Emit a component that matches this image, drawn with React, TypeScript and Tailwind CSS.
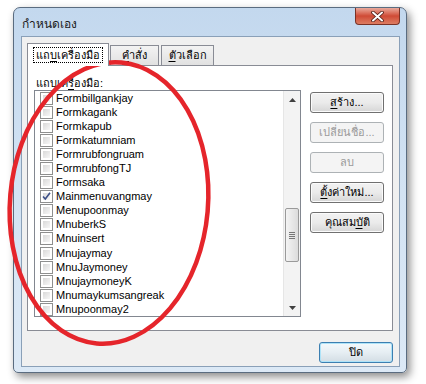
const rows = [
  'Formbillgankjay',
  'Formkagank',
  'Formkapub',
  'Formkatumniam',
  'Formrubfongruam',
  'FormrubfongTJ',
  'Formsaka',
  'Mainmenuvangmay',
  'Menupoonmay',
  'MnuberkS',
  'Mnuinsert',
  'Mnujaymay',
  'MnuJaymoney',
  'MnujaymoneyK',
  'Mnumaykumsangreak',
  'Mnupoonmay2',
];

function CheckBox({ checked }: { checked?: boolean }) {
  return (
    <div className="w-[13px] h-[13px] shrink-0 border border-[#8e8f8f] bg-white p-[2px]">
      <div className="relative w-full h-full bg-gradient-to-br from-[#d9d9d9] to-[#f7f7f7]">
        {checked && (
          <svg className="absolute -left-[2px] -top-[2px]" width="11" height="11" viewBox="0 0 11 11">
            <path d="M2 5.5 L4.3 8 L9 1.8" fill="none" stroke="#3c4f86" strokeWidth="1.6" />
          </svg>
        )}
      </div>
    </div>
  );
}

function U({ children }: { children: string }) {
  return <span className="underline underline-offset-2">{children}</span>;
}

function Btn({ children, disabled, main }: { children: React.ReactNode; disabled?: boolean; main?: boolean }) {
  if (disabled) {
    return (
      <div className="flex items-center justify-center w-[74px] h-[21px] rounded-[3px] border border-[#adb2b5] bg-[#f4f4f4] text-[11px] text-[#9a9a9a]">
        {children}
      </div>
    );
  }
  return (
    <div
      className={
        main
          ? 'flex items-center justify-center w-[74px] h-[21px] rounded-[3px] border border-[#3c7fb1] bg-gradient-to-b from-[#f4f9fc] via-[#e6eef3] to-[#d3dde4] shadow-[inset_0_0_0_1px_#aee3f8] text-[11px] text-black'
          : 'flex items-center justify-center w-[74px] h-[21px] rounded-[3px] border border-[#707070] bg-gradient-to-b from-[#f2f2f2] via-[#ebebeb] to-[#d6d6d6] shadow-[inset_0_0_0_1px_#fbfbfb] text-[11px] text-black'
      }
    >
      {children}
    </div>
  );
}

function ScrollBar() {
  return (
    <div className="flex flex-col w-[17px] h-full border-l border-[#e6e6e6] bg-[#f3f3f3]">
      <div className="flex items-center justify-center h-[17px]">
        <svg width="7" height="4" viewBox="0 0 7 4">
          <path d="M0 4 L3.5 0 L7 4 Z" fill="#404040" />
        </svg>
      </div>
      <div className="flex-1">
        <div className="mt-[100px] mx-[1px] h-[54px] rounded-[2px] border border-[#9a9a9a] bg-gradient-to-r from-[#f4f4f4] to-[#dcdcdc] flex flex-col items-center justify-center gap-[1px]">
          <div className="w-[6px] h-px bg-[#777]" />
          <div className="w-[6px] h-px bg-[#777]" />
          <div className="w-[6px] h-px bg-[#777]" />
          <div className="w-[6px] h-px bg-[#777]" />
        </div>
      </div>
      <div className="flex items-center justify-center h-[17px]">
        <svg width="7" height="4" viewBox="0 0 7 4">
          <path d="M0 0 L3.5 4 L7 0 Z" fill="#404040" />
        </svg>
      </div>
    </div>
  );
}

export default function App() {
  return (
    <div className="relative w-[426px] h-[384px] overflow-hidden bg-white pl-[13px] pt-[7px] font-['Liberation_Sans','Noto_Sans',sans-serif] text-black">
      <div className="flex flex-col w-[394px] h-[366px] rounded-t-[7px] rounded-b-[5px] border border-[#5a6c80] bg-gradient-to-b from-[#c3d8ee] via-[#d3e3f3] to-[#dce9f6] shadow-[3px_4px_9px_rgba(0,0,0,0.45)] pl-[7px] pr-[6px] pb-[5px]">
        <div className="flex justify-between h-[28px]">
          <div className="pl-[1px] pt-[9px] text-[12px] leading-[14px] text-[#1a1a1a]">กำหนดเอง</div>
          <div className="flex items-center justify-center w-[45px] h-[17px] rounded-b-[4px] border border-t-0 border-[#7a3226] bg-gradient-to-b from-[#e9a99c] via-[#cf4a35] to-[#dd7c62]">
            <svg width="13" height="11" viewBox="0 0 13 11">
              <path d="M2 1.5 L11 9.5 M11 1.5 L2 9.5" stroke="#4a1a12" strokeWidth="3.6" strokeLinecap="round" />
              <path d="M2 1.5 L11 9.5 M11 1.5 L2 9.5" stroke="#ffffff" strokeWidth="2" strokeLinecap="round" />
            </svg>
          </div>
        </div>

        <div className="flex flex-col h-[331px] border border-[#8aa0b8] bg-[#f0f0f0] pl-[5px] pt-[6px]">
          <div className="flex items-end h-[22px] text-[11px]">
            <div className="relative z-10 -mb-px flex items-center justify-center w-[82px] h-[23px] border border-b-0 border-[#898c95] bg-white">
              <div className="border border-dotted border-black px-[2px] leading-[14px]">
                แถ<U>บ</U>เครื่องมือ
              </div>
            </div>
            <div className="ml-[1px] flex items-center justify-center w-[49px] h-[20px] border border-b-0 border-[#898c95] bg-gradient-to-b from-[#f3f3f3] to-[#e1e1e1]">
              <U>ค</U>ำสั่ง
            </div>
            <div className="ml-[2px] flex items-center justify-center w-[53px] h-[20px] border border-b-0 border-[#898c95] bg-gradient-to-b from-[#f3f3f3] to-[#e1e1e1]">
              <U>ตั</U>วเลือก
            </div>
          </div>

          <div className="flex flex-col w-[366px] h-[266px] border border-[#898c95] bg-white pl-[6px] pt-[11px]">
            <div className="ml-[2px] h-[13px] leading-[13px] text-[11px]">
              แถบเค<U>ร</U>ื่องมือ:
            </div>
            <div className="flex">
              <div className="flex w-[267px] h-[227px] border border-[#828790] bg-white overflow-hidden">
                <div className="flex-1 flex flex-col overflow-hidden">
                  {rows.map((r) => (
                    <div key={r} className="flex items-center h-[14.1px] shrink-0 pl-[5px] gap-[3px] text-[11px] leading-[13px]">
                      <CheckBox checked={r === 'Mainmenuvangmay'} />
                      <span>{r}</span>
                    </div>
                  ))}
                </div>
                <ScrollBar />
              </div>
              <div className="flex flex-col gap-[9px] ml-[9px] mt-[2px]">
                <Btn>
                  <U>ส</U>ร้าง...
                </Btn>
                <Btn disabled>เปลี่ยนชื่อ...</Btn>
                <Btn disabled>ลบ</Btn>
                <Btn>
                  <U>ตั้</U>งค่าใหม่...
                </Btn>
                <Btn>
                  คุณสม<U>บ</U>ัติ
                </Btn>
              </div>
            </div>
          </div>

          <div className="flex justify-end pr-[6px] mt-[11px]">
            <Btn main>ปิด</Btn>
          </div>
        </div>
      </div>

      <svg className="absolute left-0 top-0 pointer-events-none" width="426" height="384" viewBox="0 0 426 384">
        <ellipse cx="109" cy="203" rx="99" ry="141" transform="rotate(5 109 203)" fill="none" stroke="#e5252b" strokeWidth="4.5" />
      </svg>
    </div>
  );
}
